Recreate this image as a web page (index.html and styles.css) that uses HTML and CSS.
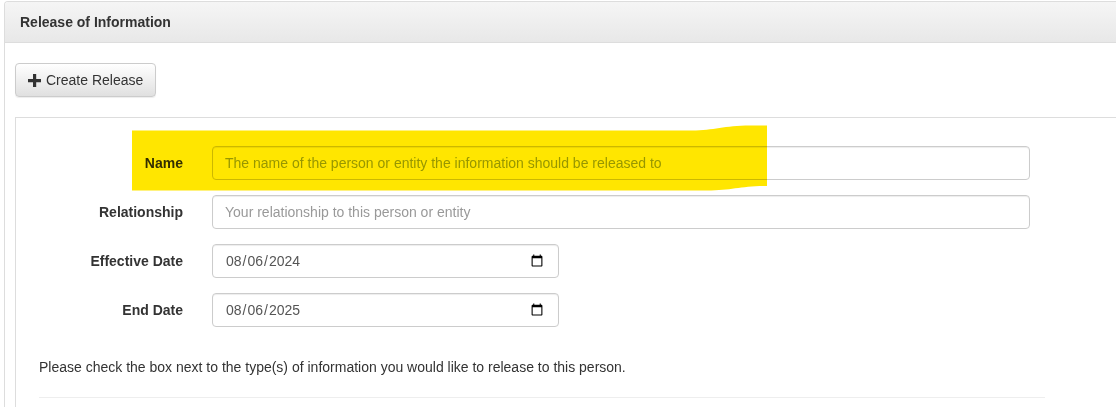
FILE: index.html
```html
<!DOCTYPE html>
<html lang="en-US">
<head>
<meta charset="utf-8">
<title>Release of Information</title>
<link rel="stylesheet" href="styles.css">
</head>
<body>
<div class="panel">
  <div class="panel-heading">Release of Information</div>
  <div class="panel-body">
    <button class="btn" type="button">
      <svg class="plus" viewBox="0 0 13 13" aria-hidden="true"><path d="M5 0h3.200v5H13v3.200H8.200V13H5V8.200H0V5h5z"/></svg>
      <span>Create Release</span>
    </button>
    <div class="well">
      <form class="form">
        <div class="row">
          <label class="label" for="name">Name</label>
          <input class="input wide marked" id="name" type="text" placeholder="The name of the person or entity the information should be released to">
        </div>
        <div class="row">
          <label class="label" for="rel">Relationship</label>
          <input class="input wide" id="rel" type="text" placeholder="Your relationship to this person or entity">
        </div>
        <div class="row">
          <label class="label" for="eff">Effective Date</label>
          <input class="input date" id="eff" type="date" value="2024-08-06">
        </div>
        <div class="row">
          <label class="label" for="end">End Date</label>
          <input class="input date" id="end" type="date" value="2025-08-06">
        </div>
      </form>
      <p class="note">Please check the box next to the type(s) of information you would like to release to this person.</p>
      <div class="rule"></div>
    </div>
  </div>
</div>
<svg class="highlight" viewBox="0 0 635 66" aria-hidden="true"><path d="M0 5.500H560C582 5.500 592 0.500 618 0.500H635V61C608 61 600 65.500 575 65.500H0Z"/></svg>
</body>
</html>
```

FILE: styles.css
```css
* { box-sizing: border-box; }
html, body { margin: 0; height: 407px; overflow: hidden; background: #fff; }
body {
  position: relative;
  font-family: "Liberation Sans", Arial, sans-serif;
  font-size: 14px;
  line-height: 20px;
  color: #333;
}
.panel {
  margin: 1px -20px 0 4px;
  border: 1px solid #ddd;
  border-bottom: 0;
  border-radius: 4px 4px 0 0;
  height: 406px;
  overflow: hidden;
}
.panel-heading {
  height: 41px;
  padding: 10px 15px;
  font-weight: 700;
  background: linear-gradient(#f5f5f5, #e8e8e8);
  border-bottom: 1px solid #ddd;
  border-radius: 3px 3px 0 0;
}
.panel-body { padding: 20px 10px 0; }
.btn {
  display: flex;
  align-items: center;
  gap: 5px;
  width: 141px;
  height: 34px;
  padding: 0 12px;
  font: 14px/20px "Liberation Sans", Arial, sans-serif;
  color: #333;
  white-space: nowrap;
  background: linear-gradient(#fff, #e0e0e0);
  border: 1px solid #ccc;
  border-radius: 4px;
  box-shadow: 0 1px 1px rgba(0,0,0,.075);
}
.plus { width: 13px; height: 13px; fill: #333; flex: none; }
.well {
  margin: 20px -30px 0 0;
  border: 1px solid #ddd;
  border-bottom: 0;
  height: 290px;
}
.form {
  display: flex;
  flex-direction: column;
  gap: 15px;
  padding-top: 28px;
}
.row { display: flex; align-items: center; gap: 29px; height: 34px; }
.label { width: 167px; text-align: right; font-weight: 700; }
.input {
  height: 34px;
  padding: 6px 12px;
  font: 14px/20px "Liberation Sans", Arial, sans-serif;
  color: #555;
  background: #fff;
  border: 1px solid #ccc;
  border-radius: 4px;
  box-shadow: inset 0 1px 1px rgba(0,0,0,.075);
}
.input::placeholder { color: #999; opacity: 1; }
.marked::placeholder { color: #98a880; }
.wide { width: 818px; }
.date { width: 347px; }
.note { margin: 30px 0 20px 23px; }
.rule { width: 1006px; margin-left: 23px; border-top: 1px solid #eee; }
.highlight {
  position: absolute;
  left: 132px;
  top: 125px;
  width: 635px;
  height: 66px;
  fill: #ffe600;
  mix-blend-mode: multiply;
}
```
